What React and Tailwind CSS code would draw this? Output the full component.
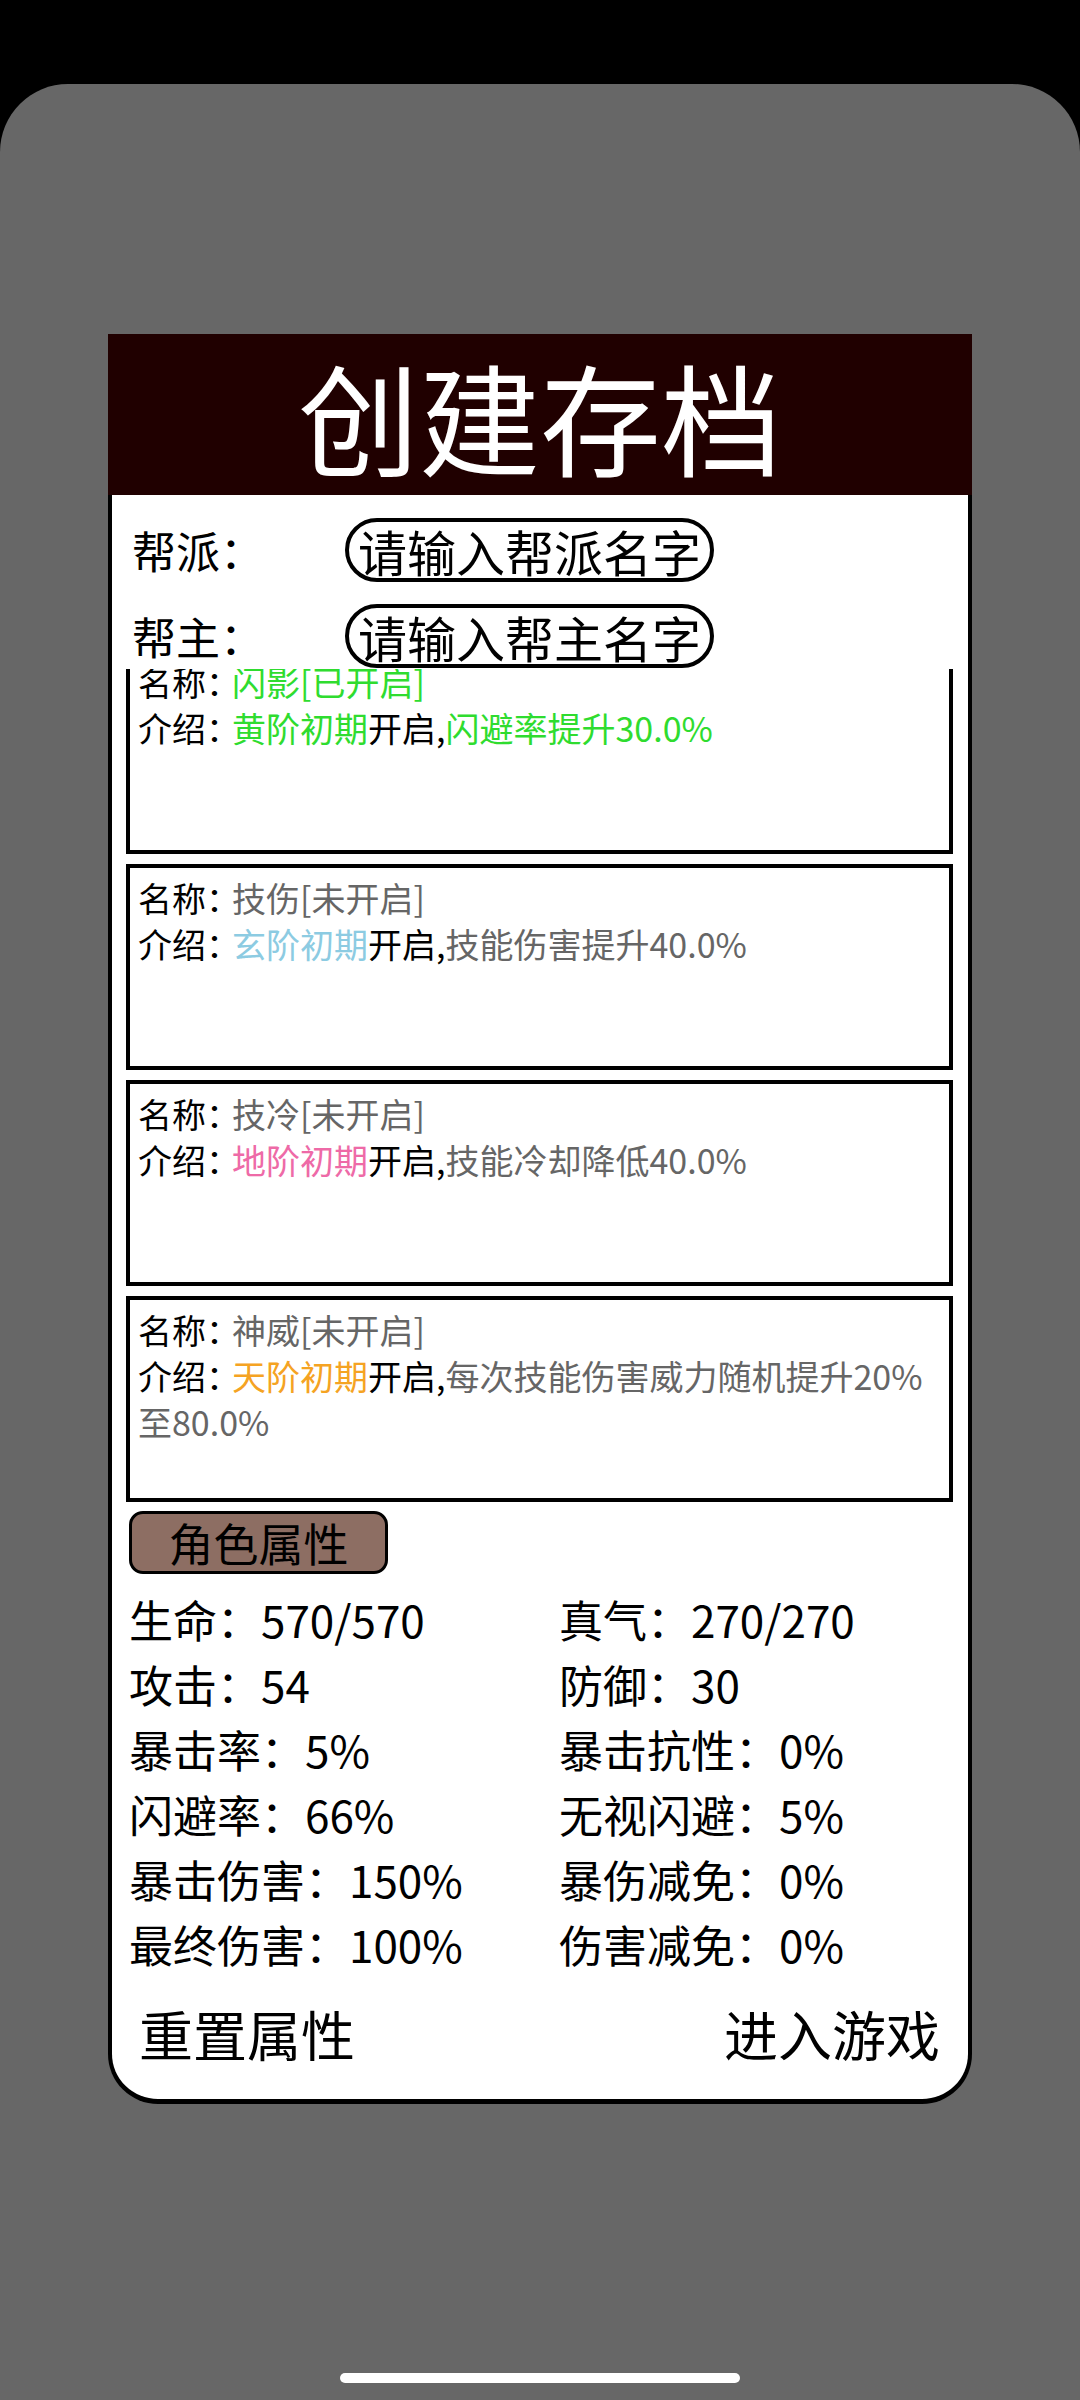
import React from "react";

const skills = [
  {
    name: "闪影[已开启]",
    nameColor: "text-[#2fdc2f]",
    stage: "黄阶初期",
    stageColor: "text-[#2fdc2f]",
    desc: "闪避率提升30.0%",
    descColor: "text-[#2fdc2f]",
  },
  {
    name: "技伤[未开启]",
    nameColor: "text-[#666666]",
    stage: "玄阶初期",
    stageColor: "text-[#8ccbe2]",
    desc: "技能伤害提升40.0%",
    descColor: "text-[#666666]",
  },
  {
    name: "技冷[未开启]",
    nameColor: "text-[#666666]",
    stage: "地阶初期",
    stageColor: "text-[#ee6aa7]",
    desc: "技能冷却降低40.0%",
    descColor: "text-[#666666]",
  },
  {
    name: "神威[未开启]",
    nameColor: "text-[#666666]",
    stage: "天阶初期",
    stageColor: "text-[#f5a323]",
    desc: "每次技能伤害威力随机提升20%至80.0%",
    descColor: "text-[#666666]",
  },
];

const stats = [
  ["生命", "570/570", "真气", "270/270"],
  ["攻击", "54", "防御", "30"],
  ["暴击率", "5%", "暴击抗性", "0%"],
  ["闪避率", "66%", "无视闪避", "5%"],
  ["暴击伤害", "150%", "暴伤减免", "0%"],
  ["最终伤害", "100%", "伤害减免", "0%"],
];

function NameInput({ label, placeholder }) {
  return (
    <div className="flex items-center h-[64px] pl-[20px]">
      <span className="w-[213px] text-[44px] leading-none text-black">{label}：</span>
      <div className="h-[64px] flex items-center px-[9px] border-[4px] border-black rounded-full bg-white">
        <span className="text-[49px] leading-none text-black">{placeholder}</span>
      </div>
    </div>
  );
}

function SkillCard({ s }) {
  return (
    <div className="h-[206px] border-[4px] border-black bg-white pt-[7px] pl-[8px] pr-[7px] text-[34px] leading-[46px]">
      <div>
        <span className="text-black mr-[-8px]">名称：</span>
        <span className={s.nameColor}>{s.name}</span>
      </div>
      <div>
        <span className="text-black mr-[-8px]">介绍：</span>
        <span className={s.stageColor}>{s.stage}</span>
        <span className="text-black">开启,</span>
        <span className={s.descColor}>{s.desc}</span>
      </div>
    </div>
  );
}

export default function App() {
  return (
    <div className="w-[1080px] min-h-[2400px] flex flex-col bg-black font-['Noto_Sans_CJK_SC','Noto_Sans',sans-serif]">
      {/* status bar */}
      <div className="h-[84px] bg-black" />

      <div className="flex-1 flex flex-col bg-[#676767] rounded-t-[68px] pt-[250px] px-[108px]">
        <div className="w-[864px]">
          {/* title */}
          <div className="h-[161px] bg-[#200000] flex items-center justify-center">
            <span className="text-white text-[121px] leading-none">创建存档</span>
          </div>

          <div className="bg-white border-x-[4px] border-b-[5px] border-black rounded-b-[50px] pt-[23px] pb-[34px]">
            <NameInput label="帮派" placeholder="请输入帮派名字" />
            <div className="h-[22px]" />
            <NameInput label="帮主" placeholder="请输入帮主名字" />

            {/* skill list, scrolled a little */}
            <div className="mt-[1px] ml-[14px] mr-[15px] h-[833px] overflow-hidden">
              <div className="-mt-[21px] flex flex-col gap-[10px]">
                {skills.map((s) => (
                  <SkillCard key={s.name} s={s} />
                ))}
              </div>
            </div>

            <div className="mt-[9px] ml-[17px]">
              <div className="w-[259px] h-[63px] bg-[#8d6e63] border-[3px] border-black rounded-[14px] flex items-center justify-center">
                <span className="text-[45px] leading-none text-black">角色属性</span>
              </div>
            </div>

            {/* stats */}
            <div className="mt-[13px] pl-[17px] grid grid-cols-[430px_1fr] text-[44px] leading-[65px] text-black">
              {stats.map((r) => (
                <React.Fragment key={r[0]}>
                  <div>
                    {r[0]}：{r[1]}
                  </div>
                  <div>
                    {r[2]}：{r[3]}
                  </div>
                </React.Fragment>
              ))}
            </div>

            <div className="mt-[26px] flex justify-between pl-[27px] pr-[28px] text-[54px] leading-[62px] text-black">
              <span>重置属性</span>
              <span>进入游戏</span>
            </div>
          </div>
        </div>

        <div className="mt-auto mb-[17px] self-center w-[400px] h-[10px] rounded-full bg-white" />
      </div>
    </div>
  );
}
